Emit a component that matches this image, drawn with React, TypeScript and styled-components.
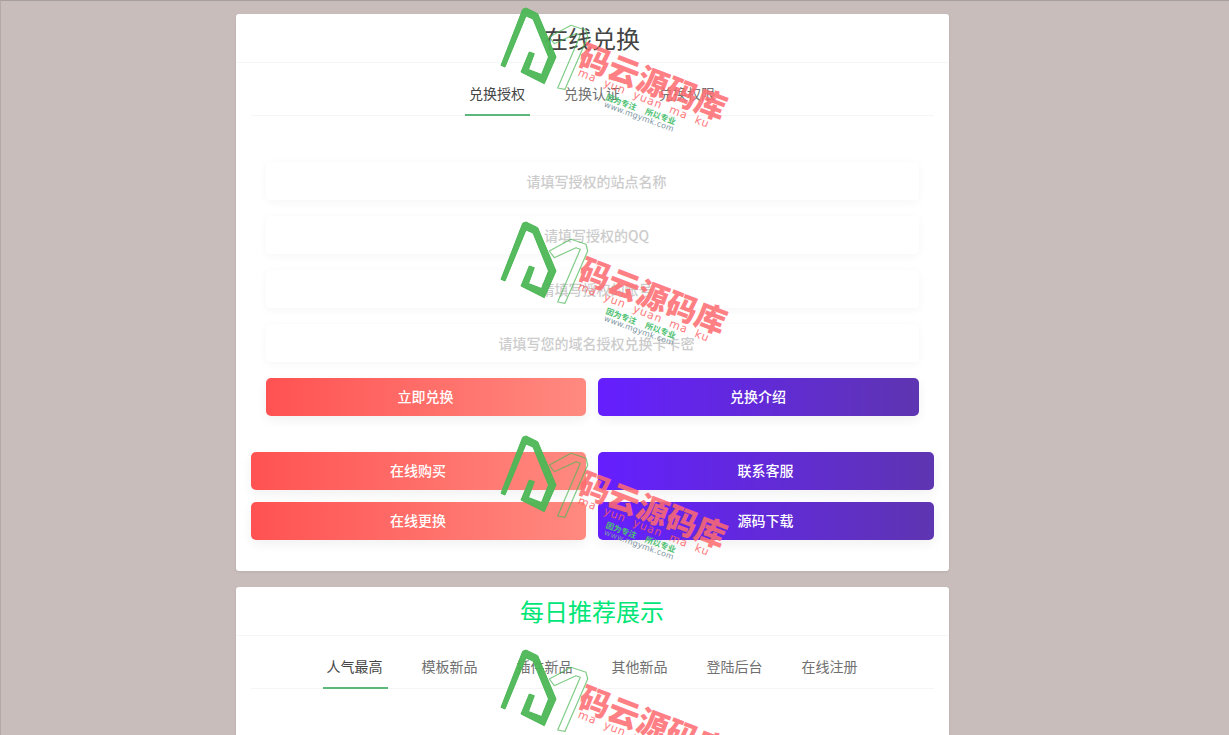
import React from 'react';
import styled, { createGlobalStyle } from 'styled-components';

const FIRST_FIELDS = [
  '请填写授权的站点名称',
  '请填写授权的QQ',
  '请填写授权的账号',
  '请填写您的域名授权兑换卡卡密',
];
const DAILY_TABS = ['人气最高', '模板新品', '插件新品', '其他新品', '登陆后台', '在线注册'];
const EXCHANGE_TABS = ['兑换授权', '兑换认证', '兑换权限'];
const MARK_COUNT = [0, 1, 2, 3];

const Watermark = (): JSX.Element => (
  <Mark>
    <MarkLogo width="100" height="100" viewBox="0 0 100 100" fill="none">
      <path
        d="M6 65.3 L27.7 9.3 L31 8 L42.7 13.7 L61 57 L49.3 83.7 L26 72 L34.3 52 L39.3 53.7 L33.5 69.5 L46.5 74.5 L53.5 57 L38 19 L31 16 L10 67 Z"
        fill="#4cb755"
        fillOpacity="0.95"
        stroke="#4cb755"
        strokeWidth="1"
        strokeLinejoin="round"
      />
      <path
        d="M54.3 37 L76 25.3 L91 30.3 L92.7 37 L70 89.3 L62.7 88 L85.3 35.3 L81 33.7 L59.3 43.7 Z"
        stroke="#4cb755"
        strokeOpacity="0.7"
        strokeWidth="1.2"
        strokeLinejoin="round"
      />
    </MarkLogo>
    <MarkPinyin>ma yun yuan ma ku</MarkPinyin>
    <MarkName>码云源码库</MarkName>
    <MarkSlogan>因为专注 所以专业</MarkSlogan>
    <MarkUrl>www.mgymk.com</MarkUrl>
  </Mark>
);

export default function App(): JSX.Element {
  return (
    <Page>
      <GlobalStyle />
      <Card>
        <CardTitle>在线兑换</CardTitle>
        <TabBar>
          {EXCHANGE_TABS.map((tab, i) => (
            <Tab key={tab} $active={i === 0}>
              {tab}
            </Tab>
          ))}
        </TabBar>
        <FormArea>
          {FIRST_FIELDS.map((text) => (
            <Field key={text} placeholder={text} />
          ))}
          <ButtonRow>
            <ActionButton $tone="red">立即兑换</ActionButton>
            <ActionButton $tone="purple">兑换介绍</ActionButton>
          </ButtonRow>
        </FormArea>
        <LinkArea>
          <ActionButton $tone="red">在线购买</ActionButton>
          <ActionButton $tone="purple">联系客服</ActionButton>
          <ActionButton $tone="red">在线更换</ActionButton>
          <ActionButton $tone="purple">源码下载</ActionButton>
        </LinkArea>
      </Card>
      <Card>
        <CardTitle $green>每日推荐展示</CardTitle>
        <TabBar>
          {DAILY_TABS.map((tab, i) => (
            <Tab key={tab} $active={i === 0}>
              {tab}
            </Tab>
          ))}
        </TabBar>
        <EmptyList />
      </Card>
      <MarkLayer>
        {MARK_COUNT.map((n) => (
          <Watermark key={n} />
        ))}
      </MarkLayer>
    </Page>
  );
}

const GlobalStyle = createGlobalStyle`
  html, body {
    margin: 0;
    height: 100%;
    overflow: hidden;
  }

  body {
    background: #c8bdba;
    font-family: "Noto Sans CJK SC", "Liberation Sans", sans-serif;
    font-size: 14px;
    color: #333;
  }

  * {
    box-sizing: border-box;
  }
`;

const Page = styled.div`
  position: relative;
  height: 735px;
  overflow: hidden;
  padding-top: 13px;
  border-top: 1px solid #a79f9d;
  border-left: 1px solid #b3aaa8;
`;

const Card = styled.section`
  width: 713px;
  margin: 0 0 16px 235px;
  background: #fff;
  border-radius: 3px;
  box-shadow: 0 1px 3px rgba(0, 0, 0, 0.08);
`;

const CardTitle = styled.h2<{ $green?: boolean }>`
  margin: 0;
  height: 49px;
  padding-right: 1px;
  line-height: 47px;
  font-size: 24px;
  font-weight: 400;
  text-align: center;
  color: ${(p) => (p.$green ? '#00e676' : '#444')};
  border-bottom: 1px solid #f6f6f6;
`;

const TabBar = styled.div`
  display: flex;
  justify-content: center;
  gap: 30px;
  height: 53px;
  margin: 0 15px;
  border-bottom: 1px solid #f5f5f5;
`;

const Tab = styled.div<{ $active?: boolean }>`
  width: 65px;
  height: 53px;
  padding-right: 1px;
  line-height: 60px;
  text-align: center;
  font-size: 14px;
  white-space: nowrap;
  color: ${(p) => (p.$active ? '#444' : '#707070')};
  border-bottom: 2px solid ${(p) => (p.$active ? '#5cb87a' : 'transparent')};
`;

const FormArea = styled.div`
  display: flex;
  flex-direction: column;
  gap: 16px;
  padding: 46px 30px 0;
`;

const Field = styled.input`
  display: block;
  width: 100%;
  height: 38px;
  padding: 0 0 0 8px;
  border: 0;
  border-radius: 4px;
  outline: 0;
  background: #fff;
  text-align: center;
  font-family: inherit;
  font-size: 14px;
  font-weight: 500;
  box-shadow: 0 2px 10px rgba(0, 0, 0, 0.04);

  &::placeholder {
    color: #ccc;
    opacity: 1;
  }
`;

const ButtonRow = styled.div`
  display: grid;
  grid-template-columns: 320px 321px;
  gap: 12px;
`;

const LinkArea = styled.div`
  display: grid;
  grid-template-columns: 335px 336px;
  column-gap: 12px;
  row-gap: 12px;
  padding: 36px 15px 31px;
`;

const ActionButton = styled.button<{ $tone: 'red' | 'purple' }>`
  height: 38px;
  padding: 0 1px 2px 0;
  border: 0;
  border-radius: 5px;
  color: #fff;
  font-family: inherit;
  font-size: 14px;
  font-weight: 500;
  background: ${(p) =>
    p.$tone === 'red'
      ? 'linear-gradient(to right, #ff5252, #ff8a80)'
      : 'linear-gradient(to right, #651fff, #5e35b1)'};
  box-shadow: 0 4px 12px rgba(0, 0, 0, 0.06);
`;

const EmptyList = styled.div`
  height: 220px;
`;

const MarkLayer = styled.div`
  position: absolute;
  top: -1px;
  left: 494px;
  display: flex;
  flex-direction: column;
  pointer-events: none;
`;

const Mark = styled.div`
  position: relative;
  flex: none;
  width: 240px;
  height: 214px;
`;

const MarkLogo = styled.svg`
  position: absolute;
  top: 0;
  left: 0;
`;

const MarkText = styled.div`
  position: absolute;
  white-space: nowrap;
  transform-origin: 0 0;
`;

const MarkName = styled(MarkText)`
  top: 38px;
  left: 92px;
  font-size: 31px;
  line-height: 32px;
  font-weight: 900;
  color: #ff6b6f;
  opacity: 0.85;
  transform: rotate(21deg);
`;

const MarkPinyin = styled(MarkText)`
  top: 66px;
  left: 86px;
  font-family: "DejaVu Sans", sans-serif;
  font-size: 11px;
  line-height: 14px;
  letter-spacing: 0.9px;
  word-spacing: 4px;
  color: #ff5a5f;
  opacity: 0.8;
  transform: rotate(22deg);
`;

const MarkSlogan = styled(MarkText)`
  top: 92px;
  left: 113px;
  font-size: 8px;
  line-height: 10px;
  font-weight: 700;
  word-spacing: 8px;
  color: #4cc070;
  transform: rotate(20deg);
`;

const MarkUrl = styled(MarkText)`
  top: 100px;
  left: 111px;
  font-family: "DejaVu Sans", sans-serif;
  font-size: 8px;
  line-height: 9px;
  letter-spacing: 0.2px;
  color: #7d95a3;
  transform: rotate(20deg);
`;
